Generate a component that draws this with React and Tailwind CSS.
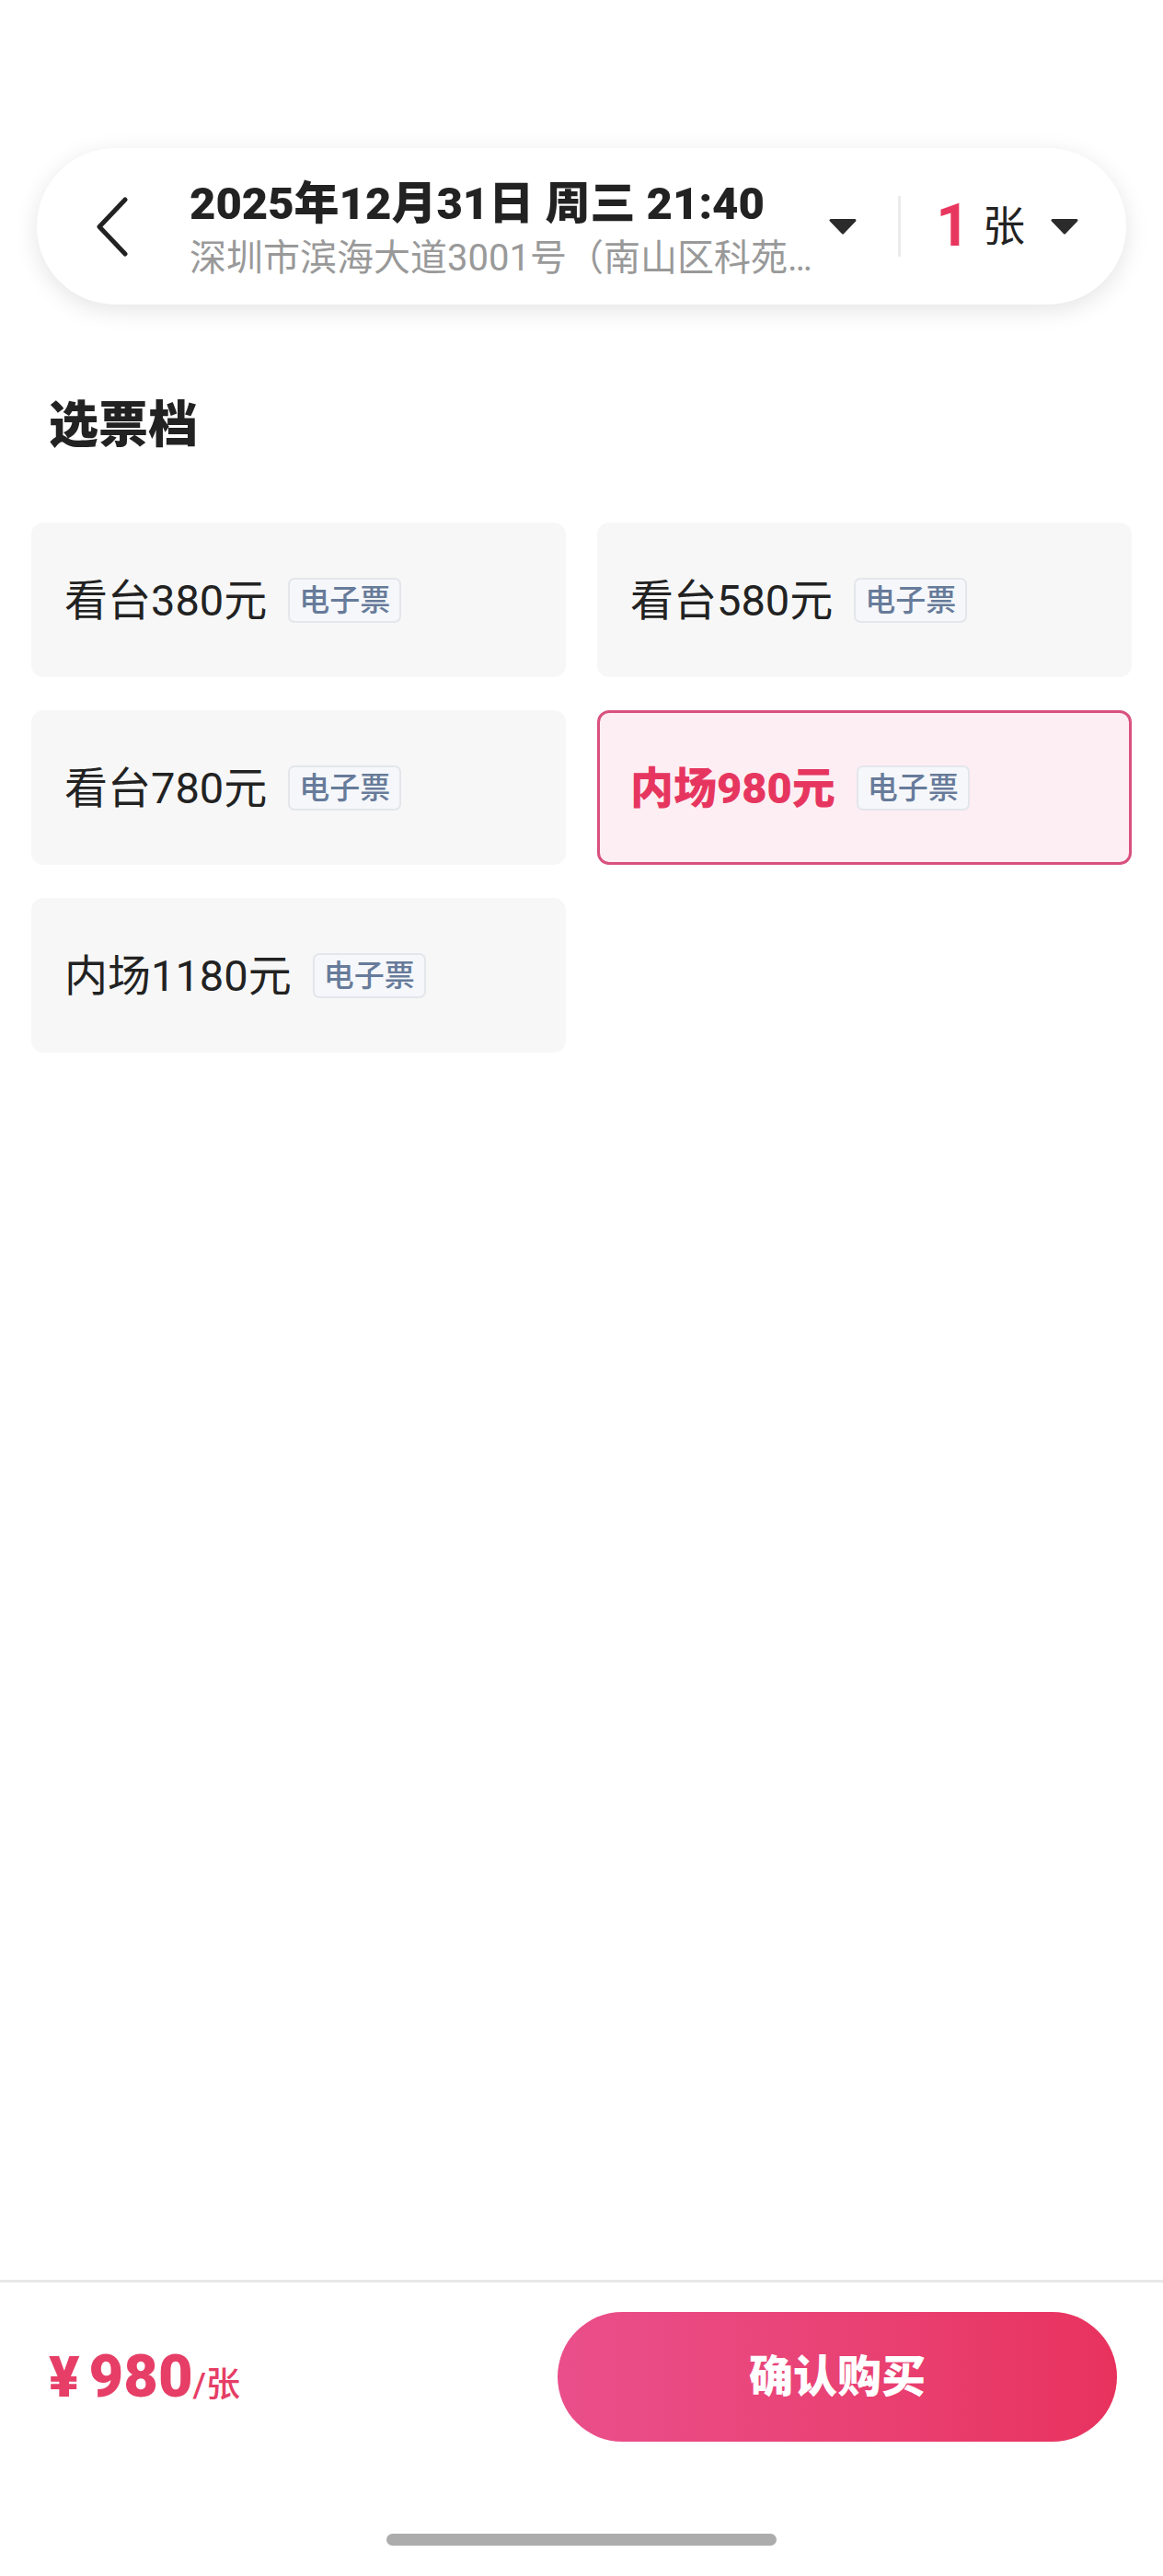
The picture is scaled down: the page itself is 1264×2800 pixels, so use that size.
const tiers = [
  { name: "看台380元", selected: false },
  { name: "看台580元", selected: false },
  { name: "看台780元", selected: false },
  { name: "内场980元", selected: true },
  { name: "内场1180元", selected: false },
]

function Caret({ className }) {
  return (
    <svg viewBox="0 0 32 18" className={className}>
      <path d="M3 2.5 H29 L16 16 Z" fill="#2b2b2b" stroke="#2b2b2b" strokeWidth="3" strokeLinejoin="round" />
    </svg>
  )
}

function TierCard({ tier }) {
  const box = tier.selected
    ? "bg-[#fdeef3] border-[#d9517f]"
    : "bg-[#f7f7f7] border-transparent"
  const text = tier.selected ? "font-black text-[#e6365f]" : "text-[#222222]"
  return (
    <div className={`h-[168px] rounded-[13px] border-[3px] ${box} flex items-center pl-[33px]`}>
      <span className={`text-[47px] leading-none ${text}`}>{tier.name}</span>
      <span className="ml-[23px] h-[49px] px-[10px] flex items-center rounded-[7px] border-[2px] border-[#e3e6eb] bg-[#f5f7fa] text-[33px] leading-none font-medium text-[#677b9a]">
        电子票
      </span>
    </div>
  )
}

export default function App() {
  return (
    <div className="w-[1264px] h-[2800px] flex flex-col bg-white font-['Roboto','Noto_Sans_CJK_SC',sans-serif]">
      <div className="pt-[161px] px-[40px]">
        <div className="h-[170px] rounded-full bg-white shadow-[0_6px_26px_rgba(0,0,0,0.11)] flex items-center pl-[63px] pr-[51px]">
          <svg viewBox="0 0 37 67" className="w-[37px] h-[67px] shrink-0">
            <path d="M33 4 L5 33.5 L33 63" fill="none" stroke="#222222" strokeWidth="5" strokeLinecap="round" strokeLinejoin="round" />
          </svg>
          <div className="ml-[66px] mt-[9px] w-[680px] min-w-0">
            <div className="text-[49px] leading-[52px] font-black text-[#222222] whitespace-nowrap">
              2025年12月31日 周三 21:40
            </div>
            <div className="mt-[9px] text-[40px] leading-[48px] text-[#999999] truncate">
              深圳市滨海大道3001号（南山区科苑路与滨海大道交汇处）
            </div>
          </div>
          <Caret className="ml-[17px] w-[32px] h-[18px] shrink-0" />
          <div className="ml-[44px] w-[3px] h-[66px] bg-[#ebebeb] shrink-0" />
          <span className="ml-[38px] text-[64px] leading-none font-bold text-[#e8375f]">1</span>
          <span className="ml-[14px] text-[46px] leading-none text-[#222222]">张</span>
          <Caret className="ml-[27px] w-[32px] h-[18px] shrink-0" />
        </div>
      </div>

      <h2 className="mt-[100px] pl-[53px] text-[54px] leading-[64px] font-black text-[#222222]">选票档</h2>

      <div className="mt-[73px] px-[34px] grid grid-cols-2 gap-x-[34px] gap-y-[36px]">
        {tiers.map((t) => (
          <TierCard key={t.name} tier={t} />
        ))}
      </div>

      <div className="flex-1" />

      <div className="border-t-[3px] border-[#e8e8e8]">
        <div className="pt-[32px] pl-[53px] pr-[50px] flex items-center justify-between">
          <div className="flex items-baseline text-[#e63e66]">
            <span className="text-[62px] leading-none font-black mr-[10px]">¥</span>
            <span className="text-[65px] leading-none font-black">980</span>
            <span className="text-[37px] leading-none font-medium">/张</span>
          </div>
          <button className="w-[608px] h-[141px] rounded-full bg-gradient-to-r from-[#ea4f8b] to-[#e8325e] text-white text-[48px] font-black">
            确认购买
          </button>
        </div>
        <div className="mt-[100px] mb-[33px] mx-auto w-[424px] h-[13px] rounded-full bg-[#acacac]" />
      </div>
    </div>
  )
}
